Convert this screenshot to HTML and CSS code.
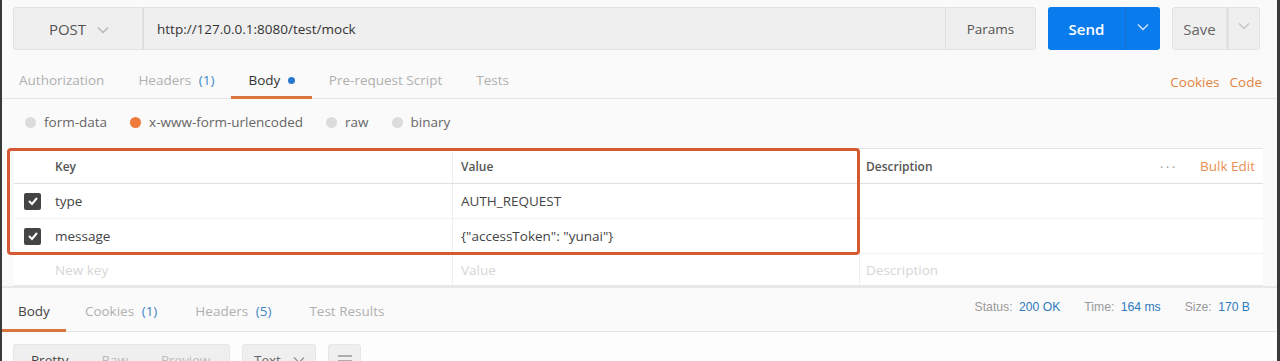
FILE: index.html
```html
<!DOCTYPE html>
<html>
<head>
  <title>POST http://127.0.0.1:8080/test/mock</title>
  <link rel="stylesheet" href="styles.css">
</head>
<body>
  <div class="app">
    <div class="request-bar">
      <div class="method">POST <span class="chev"><svg width="12" height="8" viewBox="0 0 12 8"><path d="M1 1.5l5 5 5-5" fill="none" stroke="#b5b5b5" stroke-width="1.4"/></svg></span></div>
      <div class="url">http://127.0.0.1:8080/test/mock</div>
      <div class="params">Params</div>
      <div class="send">
        <span class="send-label">Send</span>
        <span class="send-more"><svg width="12" height="8" viewBox="0 0 12 8"><path d="M1 1.5l5 5 5-5" fill="none" stroke="#cfe3fb" stroke-width="1.4"/></svg></span>
      </div>
      <div class="save">
        <span class="save-label">Save</span>
        <span class="save-more"><svg width="12" height="8" viewBox="0 0 12 8"><path d="M1 1.5l5 5 5-5" fill="none" stroke="#c4c4c4" stroke-width="1.3"/></svg></span>
      </div>
    </div>

    <div class="tabs">
      <div class="tab">Authorization</div>
      <div class="tab">Headers <span class="count">(1)</span></div>
      <div class="tab active">Body <span class="dot"></span></div>
      <div class="tab">Pre-request Script</div>
      <div class="tab">Tests</div>
      <div class="tab-links">
        <span>Cookies</span>
        <span>Code</span>
      </div>
    </div>

    <div class="body-types">
      <label class="radio"><span class="circle"></span>form-data</label>
      <label class="radio"><span class="circle on"></span>x-www-form-urlencoded</label>
      <label class="radio"><span class="circle"></span>raw</label>
      <label class="radio"><span class="circle"></span>binary</label>
    </div>

    <div class="kv-wrap">
      <div class="kv-table">
        <div class="kv-row head">
          <div class="cell check"></div>
          <div class="cell">Key</div>
          <div class="cell">Value</div>
          <div class="cell desc-head">
            <span>Description</span>
            <span class="head-actions"><span class="dots">&bull;&bull;&bull;</span><span class="bulk">Bulk Edit</span></span>
          </div>
        </div>
        <div class="kv-row">
          <div class="cell check"><span class="box"><svg width="12" height="10" viewBox="0 0 12 10"><path d="M2 5l3 3 5-6" fill="none" stroke="#fff" stroke-width="2"/></svg></span></div>
          <div class="cell">type</div>
          <div class="cell">AUTH_REQUEST</div>
          <div class="cell"></div>
        </div>
        <div class="kv-row">
          <div class="cell check"><span class="box"><svg width="12" height="10" viewBox="0 0 12 10"><path d="M2 5l3 3 5-6" fill="none" stroke="#fff" stroke-width="2"/></svg></span></div>
          <div class="cell">message</div>
          <div class="cell">{"accessToken": "yunai"}</div>
          <div class="cell"></div>
        </div>
        <div class="kv-row placeholder">
          <div class="cell check"></div>
          <div class="cell">New key</div>
          <div class="cell">Value</div>
          <div class="cell">Description</div>
        </div>
      </div>
      <div class="highlight"></div>
    </div>

    <div class="response-tabs">
      <div class="tab active">Body</div>
      <div class="tab">Cookies <span class="count">(1)</span></div>
      <div class="tab">Headers <span class="count">(5)</span></div>
      <div class="tab">Test Results</div>
      <div class="stats">
        <span>Status: <b>200 OK</b></span>
        <span>Time: <b>164 ms</b></span>
        <span>Size: <b>170 B</b></span>
      </div>
    </div>

    <div class="response-toolbar">
      <div class="views">
        <span class="on">Pretty</span>
        <span>Raw</span>
        <span>Preview</span>
      </div>
      <div class="format">Text <svg width="12" height="8" viewBox="0 0 12 8"><path d="M1 1.5l5 5 5-5" fill="none" stroke="#999" stroke-width="1.4"/></svg></div>
      <div class="wrap-btn"><svg width="16" height="14" viewBox="0 0 16 14"><path d="M1 3h14M1 8h14" stroke="#999" stroke-width="1.5"/></svg></div>
    </div>
  </div>
</body>
</html>
```

FILE: styles.css
```css
body {
  margin: 0;
  background: #fafafa;
  font-family: "Open Sans", Arial, sans-serif;
  font-size: 13.5px;
  color: #505050;
}

.app {
  width: 1280px;
  height: 361px;
  overflow: hidden;
  border-left: 2px solid #3a3a3a;
  border-right: 3px solid #3a3a3a;
  box-sizing: border-box;
}

/* request bar */
.request-bar {
  display: flex;
  height: 43px;
  margin: 7px 0 0 11px;
}

.method, .url, .params, .save-label, .save-more {
  background: #efefef;
  border: 1px solid #e2e2e2;
  box-sizing: border-box;
  display: flex;
  align-items: center;
}

.method {
  width: 130px;
  justify-content: center;
  gap: 11px;
  padding-left: 2px;
  font-size: 15px;
  color: #555;
  border-radius: 3px 0 0 3px;
}

.method .chev {
  display: flex;
  padding-top: 2px;
}

.url {
  width: 802px;
  padding-left: 13px;
  color: #333;
  border-left: 1px solid #dcdcdc;
  border-right: none;
}

.params {
  width: 91px;
  justify-content: center;
  color: #555;
  border-left: 1px solid #e0e0e0;
  border-radius: 0 3px 3px 0;
}

.send {
  display: flex;
  margin-left: 12px;
  width: 112px;
  background: #097bed;
  border-radius: 3px;
  color: #fff;
}

.send-label {
  width: 77px;
  display: flex;
  align-items: center;
  justify-content: center;
  font-size: 15px;
  font-weight: 600;
  border-right: 1px solid #1a6fcc;
}

.send-more {
  flex: 1;
  display: flex;
  align-items: center;
  justify-content: center;
  padding-bottom: 4px;
}

.save {
  display: flex;
  margin-left: 12px;
}

.save-label {
  width: 55px;
  justify-content: center;
  font-size: 15px;
  color: #666;
  border-radius: 3px 0 0 3px;
}

.save-more {
  width: 33px;
  justify-content: center;
  border-left: 2px solid #e2e2e2;
  border-radius: 0 3px 3px 0;
  padding-bottom: 6px;
}

/* request tabs */
.tabs {
  display: flex;
  align-items: stretch;
  height: 38px;
  margin-top: 10px;
  border-bottom: 1px solid #e6e6e6;
}

.tab {
  padding: 4px 17px 0;
  display: flex;
  align-items: center;
  color: #b0b0b0;
  border-bottom: 3px solid transparent;
  margin-bottom: -1px;
  gap: 4px;
  white-space: pre;
}

.tab .count {
  color: #3e86c5;
}

.tab.active {
  color: #333;
  border-bottom-color: #d8743c;
}

.tab .dot {
  width: 7px;
  height: 7px;
  border-radius: 50%;
  background: #2a79d0;
}

.tab-links {
  margin-left: auto;
  display: flex;
  align-items: center;
  gap: 10px;
  padding: 6px 15px 0 0;
  color: #e1833c;
}

/* body type radios */
.body-types {
  display: flex;
  align-items: center;
  height: 46px;
  padding: 0 0 3px 23px;
  gap: 23px;
  color: #666;
}

.radio {
  display: flex;
  align-items: center;
  gap: 8px;
}

.circle {
  width: 11px;
  height: 11px;
  border-radius: 50%;
  background: #dcdcdc;
}

.circle.on {
  background: #ee7a3c;
}

/* key value table */
.kv-wrap {
  position: relative;
  margin-left: 12px;
  width: 1249px;
}

.kv-table {
  background: #fff;
  border-top: 1px solid #e4e4e4;
}

.kv-row {
  display: grid;
  grid-template-columns: 34px 404px 407px 1fr;
  height: 34px;
  border-bottom: 1px solid #f2f2f2;
  color: #444;
}

.kv-row.head {
  border-bottom: 1px solid #e0e0e0;
  font-size: 12px;
  font-weight: 600;
  color: #555;
}

.cell {
  display: flex;
  align-items: center;
  padding-left: 7px;
}

.cell + .cell + .cell {
  border-left: 1px solid #efefef;
  padding-left: 8px;
}

.cell + .cell + .cell + .cell {
  padding-left: 6px;
}

.cell.check {
  padding-left: 10px;
}

.box {
  width: 17px;
  height: 17px;
  border-radius: 2px;
  background: #444;
  display: flex;
  align-items: center;
  justify-content: center;
}

.desc-head {
  justify-content: space-between;
}

.head-actions {
  display: flex;
  align-items: center;
  gap: 22px;
  padding-right: 8px;
  font-weight: 400;
  font-size: 13.5px;
}

.dots {
  color: #aaa;
  font-size: 8px;
  letter-spacing: 3px;
}

.bulk {
  color: #e88f54;
}

.kv-row.placeholder {
  height: 31px;
  color: #d6d6d6;
  border-bottom: 1px solid #e6e6e6;
}

.highlight {
  position: absolute;
  left: -7px;
  top: 0;
  width: 853px;
  height: 107px;
  border: 3px solid #d45a35;
  border-radius: 4px;
  box-sizing: border-box;
}

/* response */
.response-tabs {
  display: flex;
  height: 43px;
  border-top: 2px solid #e8e8e8;
  border-bottom: 1px solid #e6e6e6;
}

.response-tabs .tab {
  padding: 4px 19px 0;
}

.response-tabs .tab:first-child {
  padding: 4px 16px 0;
}

.response-tabs .tab.active {
  color: #444;
}

.stats {
  margin-left: auto;
  display: flex;
  align-items: center;
  gap: 24px;
  padding: 0 27px 6px 0;
  font-family: "Liberation Sans", Arial, sans-serif;
  font-size: 12.2px;
  color: #999;
}

.stats b {
  font-weight: 400;
  color: #2e7bbf;
  margin-left: 3px;
}

.response-toolbar {
  display: flex;
  gap: 12px;
  padding: 12px 0 0 11px;
  background: #fdfdfd;
  height: 40px;
}

.views, .format, .wrap-btn {
  background: #efefef;
  border: 1px solid #e6e6e6;
  border-radius: 3px;
  height: 32px;
  display: flex;
  align-items: center;
  box-sizing: border-box;
}

.views {
  width: 217px;
  padding-left: 17px;
  gap: 33px;
  color: #bbb;
}

.views .on {
  color: #444;
}

.format {
  width: 74px;
  padding-left: 11px;
  gap: 12px;
  color: #666;
}

.wrap-btn {
  width: 33px;
  justify-content: center;
}
```
